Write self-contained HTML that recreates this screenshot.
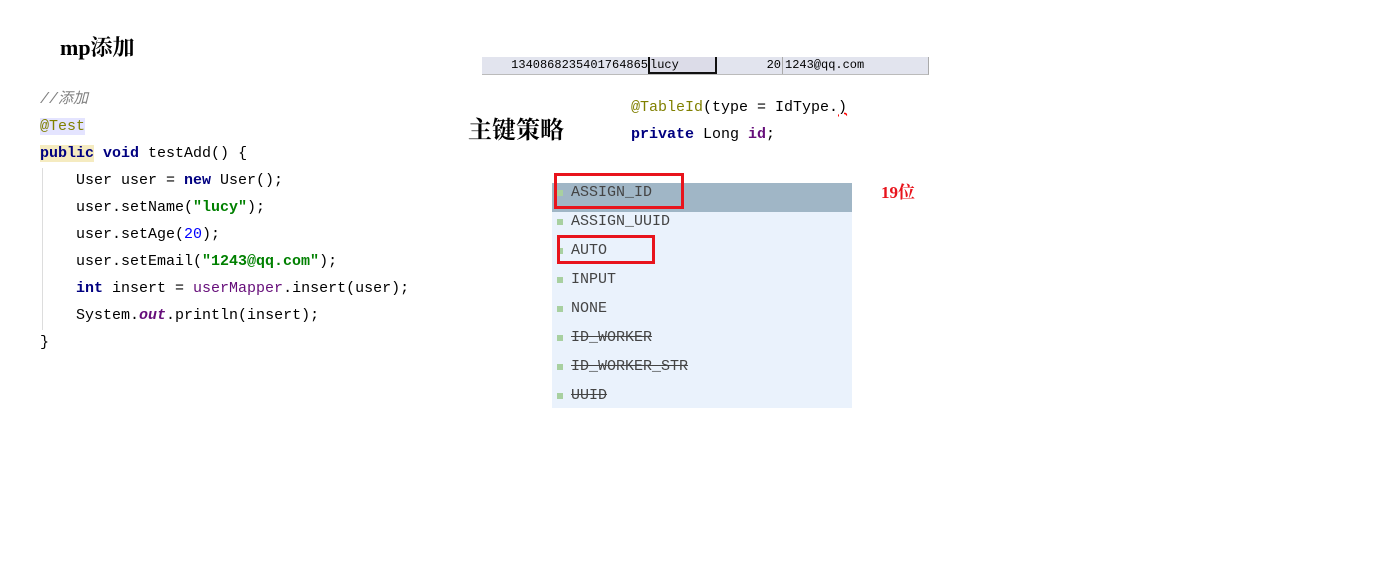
<!DOCTYPE html>
<html><head><meta charset="utf-8"><style>
body{margin:0;width:1380px;height:573px;background:#fff;position:relative;overflow:hidden;font-family:"Liberation Mono","Noto Sans CJK SC",monospace;}
.a{position:absolute;white-space:pre;}
.code{font-size:15px;line-height:27px;color:#000;}
.k{color:#000080;font-weight:bold}
.s{color:#008000;font-weight:bold}
.n{color:#0000ff}
.an{color:#808000}
.f{color:#660e7a;font-weight:bold}
.list{position:absolute;left:552px;top:183px;width:300px;height:225px;background:#eaf2fc;}
.row{height:29px;line-height:19px;font-size:15px;color:#444;padding-left:19px;position:relative;font-family:"Liberation Mono",monospace;box-sizing:border-box;}
.row::before{content:"";position:absolute;left:5px;top:7px;width:6px;height:6px;background:#a8d0a0;}
.del{text-decoration:line-through}
.box{position:absolute;border:3px solid #e8141c;}
</style></head><body>
<div class="a" style="left:60px;top:31px;font-size:22px;font-weight:bold;font-family:'Liberation Serif','Noto Serif CJK SC',serif;">mp添加</div>
<div class="a code" style="left:40px;top:86px;"><span style="color:#808080;font-style:italic">//添加</span>
<span class="an" style="background:#e4e4ff">@Test</span>
<span class="k" style="background:#f5ebc0">public</span> <span class="k">void</span> testAdd() {
    User user = <span class="k">new</span> User();
    user.setName(<span class="s">"lucy"</span>);
    user.setAge(<span class="n">20</span>);
    user.setEmail(<span class="s">"1243@qq.com"</span>);
    <span class="k">int</span> insert = <span class="f" style="font-weight:normal">userMapper</span>.insert(user);
    System.<span class="f" style="font-style:italic">out</span>.println(insert);
}</div>
<div style="position:absolute;left:42px;top:168px;width:1px;height:162px;background:#ddd"></div>
<div style="position:absolute;left:482px;top:57px;width:446px;height:17px;background:#e2e4ee;border-right:1px solid #aaa;border-bottom:1px solid #bbb;font-size:12px;line-height:17px;">
<div class="a" style="left:0;width:166px;text-align:right;">1340868235401764865</div>
<div class="a" style="left:166px;width:65px;height:15px;border:2px solid #111;border-top:0;background:#dcdce8;">lucy</div>
<div class="a" style="left:233px;width:66px;text-align:right;">20</div>
<div class="a" style="left:300px;border-left:1px solid #aaa;padding-left:2px;">1243@qq.com</div>
</div>
<div class="a" style="left:468px;top:110px;font-size:24px;font-weight:bold;font-family:'Noto Serif CJK SC',serif;">主键策略</div>
<div class="a code" style="left:631px;top:94px;"><span class="an">@TableId</span>(type = IdType.<span style="text-decoration:underline wavy red">)</span>
<span class="k">private</span> Long <span class="f">id</span>;</div>
<div class="list">
<div class="row" style="background:#a0b6c6">ASSIGN_ID</div>
<div class="row">ASSIGN_UUID</div>
<div class="row">AUTO</div>
<div class="row">INPUT</div>
<div class="row">NONE</div>
<div class="row del">ID_WORKER</div>
<div class="row del">ID_WORKER_STR</div>
<div class="row del">UUID</div>
</div>
<div class="box" style="left:554px;top:173px;width:124px;height:30px;"></div>
<div class="box" style="left:557px;top:235px;width:92px;height:23px;"></div>
<div class="a" style="left:881px;top:178px;font-size:17px;font-weight:bold;color:#e8141c;font-family:'Liberation Serif','Noto Serif CJK SC',serif;">19位</div>
</body></html>
